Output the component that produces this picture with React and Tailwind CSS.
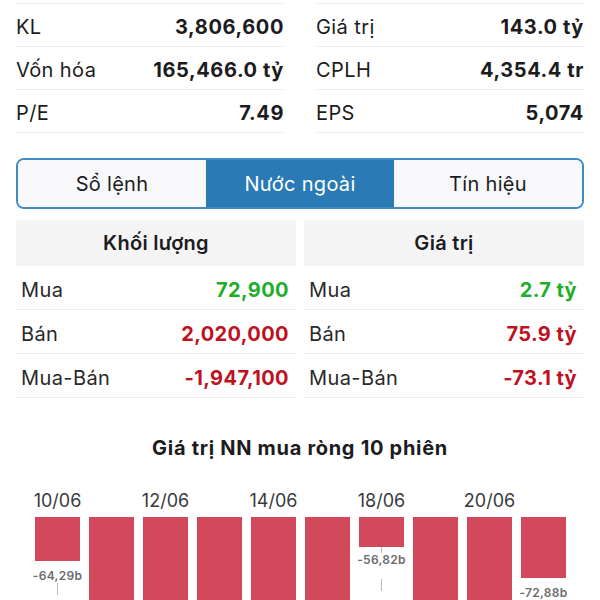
const STATS = [
  [['KL', '3,806,600'], ['Vốn hóa', '165,466.0 tỷ'], ['P/E', '7.49']],
  [['Giá trị', '143.0 tỷ'], ['CPLH', '4,354.4 tr'], ['EPS', '5,074']],
]

const TABS = ['Sổ lệnh', 'Nước ngoài', 'Tín hiệu']

const FOREIGN = [
  {
    title: 'Khối lượng',
    rows: [
      ['Mua', '72,900', 'text-[#1fae2a]'],
      ['Bán', '2,020,000', 'text-[#c0111f]'],
      ['Mua-Bán', '-1,947,100', 'text-[#c0111f]'],
    ],
  },
  {
    title: 'Giá trị',
    rows: [
      ['Mua', '2.7 tỷ', 'text-[#1fae2a]'],
      ['Bán', '75.9 tỷ', 'text-[#c0111f]'],
      ['Mua-Bán', '-73.1 tỷ', 'text-[#c0111f]'],
    ],
  },
]

// heights in px from the top of the bar row (y=517)
const BARS = [
  { date: '10/06', h: 44, label: '-64,29b' },
  { h: 120 },
  { date: '12/06', h: 120 },
  { h: 120 },
  { date: '14/06', h: 120 },
  { h: 120 },
  { date: '18/06', h: 30, label: '-56,82b', tickAbove: true },
  { h: 120 },
  { date: '20/06', h: 120 },
  { h: 61, label: '-72,88b', noTick: true },
]

export default function App() {
  return (
    <div
      className="w-[600px] h-[600px] overflow-hidden bg-white text-[#1c1c1e] px-4"
      style={{ fontFamily: 'Inter, "Noto Sans", sans-serif' }}
    >
      {/* Stats */}
      <div className="grid grid-cols-2 gap-8 mt-[3px]">
        {STATS.map((col, i) => (
          <div key={i} className="border-t border-[#eeeeee]">
            {col.map(([k, v]) => (
              <div
                key={k}
                className="flex items-center justify-between h-[43px] pt-[3px] border-b border-[#eeeeee] text-[20px] tracking-[0.4px]"
              >
                <span>{k}</span>
                <span className="font-bold tracking-[0.6px]">{v}</span>
              </div>
            ))}
          </div>
        ))}
      </div>

      {/* Tabs */}
      <div className="mt-[25px] grid grid-cols-3 h-[51px] rounded-lg border-2 border-[#3f8ac2] overflow-hidden text-[20px] tracking-[0.3px]">
        {TABS.map((t, i) => (
          <div
            key={t}
            className={`flex items-center justify-center ${
              i === 1 ? 'bg-[#2a7ab6] text-white' : 'bg-[#f8f8fa] text-[#1c1c1e]'
            }`}
          >
            {t}
          </div>
        ))}
      </div>

      {/* Foreign trading */}
      <div className="mt-[11px] grid grid-cols-2 gap-2">
        {FOREIGN.map((tbl) => (
          <div key={tbl.title}>
            <div className="flex items-center justify-center h-[46px] bg-[#f4f4f4] text-[20px] font-semibold tracking-[0.3px]">
              {tbl.title}
            </div>
            {tbl.rows.map(([k, v, c]) => (
              <div
                key={k}
                className="flex items-center justify-between h-[44px] pt-[4px] pl-[5px] pr-[7px] border-b border-[#eeeeee] text-[20px] tracking-[0.4px]"
              >
                <span className="text-[#2a2a2a]">{k}</span>
                <span className={`font-bold ${c}`}>{v}</span>
              </div>
            ))}
          </div>
        ))}
      </div>

      {/* Chart */}
      <h2 className="mt-[38px] text-center text-[20px] font-bold tracking-[0.7px] leading-[24px]">
        Giá trị NN mua ròng 10 phiên
      </h2>
      <div className="mt-[30px] flex gap-[9px] pl-[19px]">
        {BARS.map((b, i) => (
          <div key={i} className="w-[45px] flex flex-col items-center">
            <div className="h-[27px] text-[18px] leading-[22px] text-[#3a3a3c] whitespace-nowrap">
              {b.date || ''}
            </div>
            <div className="w-[45px] bg-[#d0485a]" style={{ height: b.h }} />
            {b.label && (
              <div className="flex flex-col items-center">
                {b.tickAbove ? (
                  <div className="w-px h-[6px] bg-[#b8b8b8]" />
                ) : (
                  <div className="h-[8px]" />
                )}
                <div className="text-[12px] leading-[14px] font-semibold text-[#6b6b70] whitespace-nowrap tracking-[0.3px]">
                  {b.label}
                </div>
                {!b.noTick && (
                  <div className={`w-px h-[12px] bg-[#b8b8b8] ${b.tickAbove ? 'mt-[12px]' : ''}`} />
                )}
              </div>
            )}
          </div>
        ))}
      </div>
    </div>
  )
}
